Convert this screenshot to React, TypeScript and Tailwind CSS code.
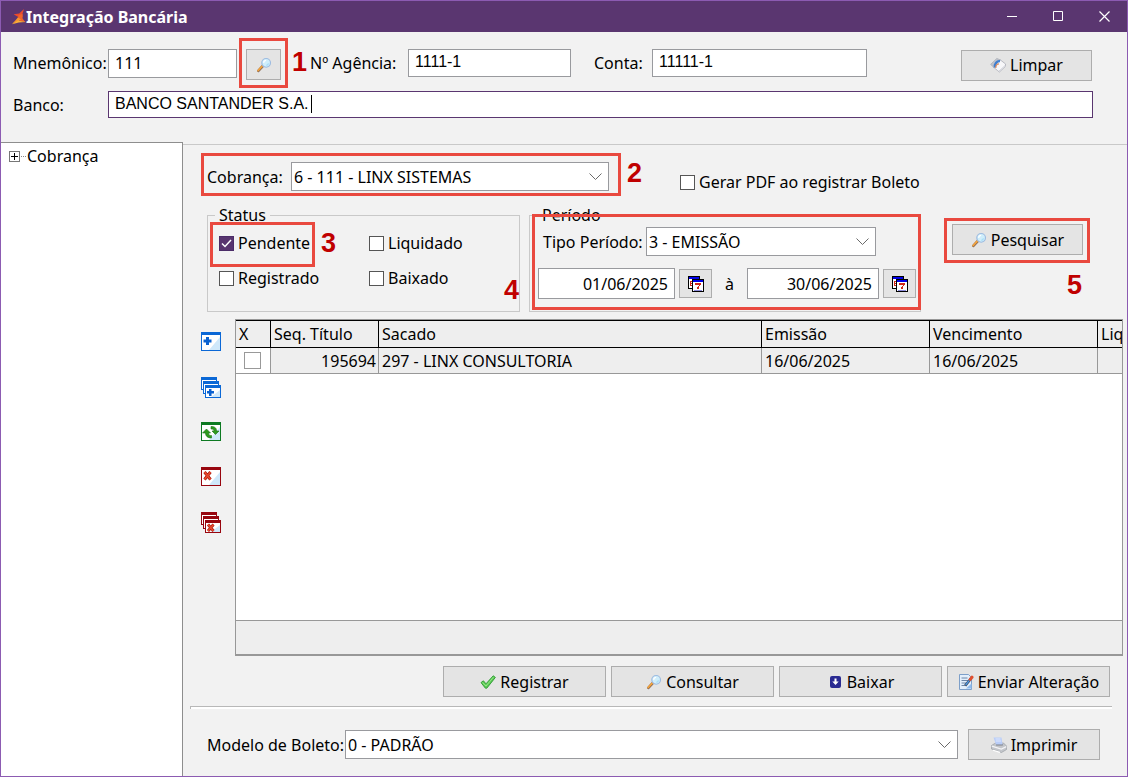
import React from "react";

const FIELD = "border border-[#999a9e] bg-white text-black outline-none";
const BUTTON =
  "flex items-center justify-center gap-1 whitespace-nowrap border border-[#adadad] bg-[#e4e4e4] text-black";

function Magnifier() {
  return (
    <svg width="16" height="16" viewBox="-1 -1 18 18" aria-hidden="true">
      <path d="M1.6 14.6 6.4 9.4" stroke="#8a6a55" strokeWidth="3" strokeLinecap="round" />
      <path d="M1.4 14.2 6 9.2" stroke="#f3a33c" strokeWidth="2" strokeLinecap="round" />
      <circle cx="10.4" cy="5.6" r="4.9" fill="#cfeefb" stroke="#9dbbe0" strokeWidth="1.3" />
      <path d="M7.6 5.6a3 3 0 0 1 2.8-2.9" stroke="#fff" strokeWidth="1.4" fill="none" />
      <path d="M13 6.2a2.8 2.8 0 0 1-2.4 2.2" stroke="#a5dcf5" strokeWidth="1.4" fill="none" />
    </svg>
  );
}

function Logo() {
  return (
    <svg width="14" height="16" viewBox="0 0 14 16" aria-hidden="true">
      <path d="M12 0 10.600 4.500 10.600 8 7 8.500 1.600 5.200 7.200 4.600Z" fill="#ea4a2c" />
      <path d="M6.600 6 10.500 5 10.600 9.500 13.400 13.200 8.400 12 6 9.500Z" fill="#f0642a" />
      <path d="M6 8.200 9 10.800 5.600 12.600 0 15 3.800 11Z" fill="#f8932c" />
      <path d="M0 15.200 6 11.400 13.800 13 6.800 13.600Z" fill="#fbb03a" />
    </svg>
  );
}

function EraserIcon() {
  return (
    <svg width="16" height="16" viewBox="0 0 16 16" aria-hidden="true">
      <path d="M0.6 7.4 6.8 1.4 10.2 2.8 3.8 10.4Z" fill="#bfc3cc" stroke="#a0a4ae" strokeWidth=".6" />
      <path d="M3.8 10.4 10.2 2.8 15.6 7 15.2 9.6 9.4 15 7.6 13.6Z" fill="#f7f7f9" stroke="#a9acb6" strokeWidth=".8" />
      <path d="M5 10.4C4.2 7 7 3.600 10 4.200" stroke="#3f7fd0" strokeWidth="2.400" fill="none" />
      <path d="M5.800 11C5.600 8.600 7.200 7 9 6.800" stroke="#e08a5a" strokeWidth="1.2" fill="none" />
      <path d="M9 14 14.800 8.800" stroke="#d3d5dc" />
    </svg>
  );
}

function CheckIcon() {
  return (
    <svg width="16" height="16" viewBox="0 0 16 16" aria-hidden="true">
      <path d="M1 8.6 3.4 6.8 6 9.8 13.2 1.8 15.4 3.4 6.8 14.2 5.4 14.2Z" fill="#5ccb55" stroke="#2f9a35" strokeWidth=".9" strokeLinejoin="round" />
      <path d="M2.4 8.6 6 12 13.4 3.2" stroke="#9be88c" strokeWidth=".9" fill="none" />
    </svg>
  );
}

function DownIcon() {
  return (
    <svg width="16" height="16" viewBox="0 0 16 16" aria-hidden="true">
      <rect x="3" y="2" width="11" height="12" rx="2" fill="#2a2b92" />
      <path d="M7.5 4.6h2v3h2.2L8.5 11 5.300 7.600h2.200z" fill="#fff" />
    </svg>
  );
}

function EditIcon() {
  return (
    <svg width="16" height="16" viewBox="0 0 16 16" aria-hidden="true">
      <path d="M1.500.500h9l3 3v12h-12z" fill="#e3effc" stroke="#7d9fc9" />
      <path d="M3.500 4h6M3.500 6.500h7M3.500 9h5M3.500 11.500h4" stroke="#6d86a8" />
      <path d="M8 14.500h5.500v-5z" fill="#8ebcf0" />
      <path d="M7.200 11.600 13.200 4.200" stroke="#3c4a60" strokeWidth="2.600" />
      <path d="M7.600 11 12.600 4.800" stroke="#4f9be8" strokeWidth="1.200" />
      <path d="M12.200 5.400 14 3.200" stroke="#e0502f" strokeWidth="3" strokeLinecap="round" />
    </svg>
  );
}

function PrinterIcon() {
  return (
    <svg width="16" height="16" viewBox="0 0 16 16" aria-hidden="true">
      <path d="M.5 8.500 4.500 6h8l3 3v3.500l-5 3-10-3.500z" fill="#c3c6cb" stroke="#9a9da3" strokeWidth=".7" />
      <path d="M5 7.800h6.800" stroke="#6c6f76" strokeWidth="1.200" />
      <path d="M2.500.500h8l1 7H5z" fill="#b9cdf8" />
      <path d="M4.500 2h5M4.800 4h5.400" stroke="#dfe8fd" />
      <path d="M.8 9.200 10.300 12 15.300 9.600" stroke="#f4f4f6" strokeWidth="1.200" fill="none" />
      <path d="M2 13.200 9 15.400" stroke="#fff" strokeWidth="1.200" />
    </svg>
  );
}

function CalendarIcon() {
  return (
    <svg width="16" height="16" viewBox="0 0 16 16" shapeRendering="crispEdges" aria-hidden="true">
      <rect x="0.5" y="0.5" width="11" height="12" fill="#fff" stroke="#000" />
      <rect x="1" y="1" width="10" height="2" fill="#0000e8" />
      <path d="M2 5h2v1H3v1h1v1H3v1h1v1H2z" fill="#d02818" />
      <rect x="4.500" y="3.500" width="11" height="12" fill="#fff" stroke="#000" />
      <rect x="5" y="4" width="10" height="2" fill="#0000e8" />
      <path d="M7 7h6v2h-1v1h-1v3H9v-2h1v-1h1V8.500H7z" fill="#d02818" />
      <path d="M6 14h8" stroke="#8a8ad8" />
    </svg>
  );
}

function WindowShape({ x, y, w, h, line, head }: { x: number; y: number; w: number; h: number; line: string; head: string }) {
  return (
    <g>
      <rect x={x + 0.5} y={y + 0.5} width={w - 1} height={h - 1} fill="#fff" stroke={line} />
      <path d={`M${x + w - 1} ${y + 5}v${h - 6}h-${Math.round(w * 0.55)}z`} fill="#cfe8fa" />
      <rect x={x} y={y} width={w} height="3" fill={head} />
    </g>
  );
}

function AddIcon() {
  return (
    <svg width="21" height="21" viewBox="0 0 21 21" aria-hidden="true">
      <WindowShape x={0} y={0} w={20} h={19} line="#0b68d6" head="#0b68d6" />
      <path d="M5 5h3v2.500h2.500v3H8V13H5v-2.500H2.500v-3H5z" fill="#0b62d0" />
    </svg>
  );
}

function AddAllIcon() {
  return (
    <svg width="21" height="21" viewBox="0 0 21 21" aria-hidden="true">
      <WindowShape x={0} y={0} w={16} h={13} line="#0b68d6" head="#0b68d6" />
      <WindowShape x={2} y={4} w={16} h={13} line="#0b68d6" head="#0b68d6" />
      <WindowShape x={4} y={8} w={16} h={13} line="#0b68d6" head="#0b68d6" />
      <path d="M8 12h2.500v2H13v2.500h-2.500V19H8v-2.500H6V14h2z" fill="#0b62d0" />
    </svg>
  );
}

function RefreshIcon() {
  return (
    <svg width="21" height="21" viewBox="0 0 21 21" aria-hidden="true">
      <WindowShape x={0} y={0} w={20} h={19} line="#0d7a22" head="#0d7a22" />
      <path d="M5.500 7 9.500 11H7.500c0 2 1 2.500 3 2.500v2.500C6.500 16 4.500 14 4.500 11H1.500z" fill="#2f9a1e" stroke="#167017" strokeWidth=".6" />
      <path d="M14.500 12.500 11 9h2c0-1.600-1-2-3-2V4.500c4 0 5.500 1.500 5.500 4.500h2.500z" fill="#2f9a1e" stroke="#167017" strokeWidth=".6" />
    </svg>
  );
}

function RemoveIcon() {
  return (
    <svg width="21" height="21" viewBox="0 0 21 21" aria-hidden="true">
      <WindowShape x={0} y={0} w={20} h={19} line="#98060f" head="#98060f" />
      <path d="M3.500 5 9.500 12.500M9.500 5 3.500 12.500" stroke="#a81c10" strokeWidth="3" />
      <path d="M3.500 5 9.500 12.500M9.500 5 3.500 12.500" stroke="#ea4a30" strokeWidth="1.600" />
    </svg>
  );
}

function RemoveAllIcon() {
  return (
    <svg width="21" height="21" viewBox="0 0 21 21" aria-hidden="true">
      <WindowShape x={0} y={0} w={16} h={13} line="#98060f" head="#98060f" />
      <WindowShape x={2} y={4} w={16} h={13} line="#98060f" head="#98060f" />
      <WindowShape x={4} y={8} w={16} h={13} line="#98060f" head="#98060f" />
      <path d="M7 12.500 12.500 19M12.500 12.500 7 19" stroke="#a81c10" strokeWidth="2.800" />
      <path d="M7 12.500 12.500 19M12.500 12.500 7 19" stroke="#ea4a30" strokeWidth="1.400" />
    </svg>
  );
}

function Select({ id, value, className }: { id: string; value: string; className: string }) {
  return (
    <div className={`relative ${className}`}>
      <select id={id} className={`${FIELD} block h-[29px] w-full appearance-none pl-0.5 pr-8`}>
        <option>{value}</option>
      </select>
      <svg className="pointer-events-none absolute right-[7px] top-[11px]" width="13" height="8" viewBox="0 0 13 8" aria-hidden="true">
        <path d="M.5.500 6.500 6.500 12.500.500" fill="none" stroke="#6a6a6a" />
      </svg>
    </div>
  );
}

function Check({ label, checked }: { label: string; checked?: boolean }) {
  return (
    <label className="flex items-center gap-1 whitespace-nowrap">
      <span className="relative block size-[15px] shrink-0">
        <input
          type="checkbox"
          defaultChecked={checked}
          className="peer block size-[15px] appearance-none border border-[#555] bg-white checked:border-[#4b2c68] checked:bg-[#58356f]"
        />
        <svg className="pointer-events-none absolute inset-0 hidden peer-checked:block" width="15" height="15" viewBox="0 0 15 15" aria-hidden="true">
          <path d="M3 7.500 6 10.500 12 4" fill="none" stroke="#fff" strokeWidth="1.500" />
        </svg>
      </span>
      {label}
    </label>
  );
}

function Step({ n, className }: { n: number; className: string }) {
  return (
    <span className={`pointer-events-none absolute font-['Liberation_Sans',sans-serif] text-[27px] font-bold leading-[27px] text-[#c00000] ${className}`}>
      {n}
    </span>
  );
}

const CELL = "overflow-hidden whitespace-nowrap px-[3px] py-0 text-left font-normal";

export default function App() {
  return (
    <div className="flex min-h-screen flex-col border border-[#8c5bb2] bg-[#f2f2f2] font-['Noto_Sans',sans-serif] text-base leading-5 text-black">
      <header className="flex h-[31px] items-center bg-[#5a3670] pl-[11px] text-white">
        <Logo />
        <h1 className="flex-1 text-base font-bold leading-5">Integração Bancária</h1>
        <button type="button" aria-label="Minimizar" className="flex h-full w-[46px] items-center justify-center">
          <svg width="11" height="11" viewBox="0 0 11 11"><path d="M0 5.500h10" stroke="#fff" /></svg>
        </button>
        <button type="button" aria-label="Maximizar" className="flex h-full w-[46px] items-center justify-center">
          <svg width="11" height="11" viewBox="0 0 11 11"><path d="M.5.500h9v9h-9z" fill="none" stroke="#fff" /></svg>
        </button>
        <button type="button" aria-label="Fechar" className="flex h-full w-[46px] items-center justify-center">
          <svg width="11" height="11" viewBox="0 0 11 11"><path d="M.5.500l10 10M10.500.500l-10 10" stroke="#fff" strokeWidth="1.200" /></svg>
        </button>
      </header>

      <section className="flex flex-col pb-6 pl-3 pr-[34px] pt-[7px]">
        <div className="flex h-12 items-center">
          <label htmlFor="mnemonico" className="w-[95px] shrink-0">Mnemônico:</label>
          <input id="mnemonico" defaultValue="111" className={`${FIELD} h-[29px] w-[129px] px-1.5`} />
          <div className="relative ml-0.5 border-[3px] border-[#e9493f] px-1 py-[5px]">
            <button type="button" aria-label="Procurar" className={`${BUTTON} mt-[3px] h-[31px] w-[35px]`}>
              <Magnifier />
            </button>
            <Step n={1} className="left-[50px] top-2" />
          </div>
          <label htmlFor="agencia" className="ml-[22px] w-[98px] shrink-0 whitespace-nowrap">Nº Agência:</label>
          <input id="agencia" defaultValue="1111-1" className={`${FIELD} h-7 w-[163px] px-1.5 pb-0.5 font-['Liberation_Sans',sans-serif]`} />
          <label htmlFor="conta" className="ml-[23px] w-[58px] shrink-0">Conta:</label>
          <input id="conta" defaultValue="11111-1" className={`${FIELD} h-7 w-[215px] px-1.5 pb-0.5 font-['Liberation_Sans',sans-serif]`} />
          <button type="button" className={`${BUTTON} ml-auto mr-px mt-1 h-[31px] w-[131px]`}>
            <EraserIcon />
            Limpar
          </button>
        </div>
        <div className="mt-1 flex items-center">
          <label htmlFor="banco" className="w-[95px] shrink-0">Banco:</label>
          <div className="relative flex-1">
            <input
              id="banco"
              defaultValue="BANCO SANTANDER S.A."
              className="block h-[27px] w-full border border-[#5a3670] bg-white px-1.5 pb-0.5 font-['Liberation_Sans',sans-serif] outline-none"
            />
            <span className="absolute left-[203px] top-1 h-[18px] w-px bg-black" />
          </div>
        </div>
      </section>

      <div className="flex flex-1">
        <nav className="w-[182px] shrink-0 border-r border-t border-[#8e8e8e] bg-white pl-2 pt-[3px]">
          <a href="#cobranca" className="flex items-center">
            <svg width="18" height="11" viewBox="0 0 18 11" shapeRendering="crispEdges" aria-hidden="true">
              <rect x=".5" y=".5" width="10" height="10" fill="#fff" stroke="#777" />
              <path d="M2 5.500h7M5.500 2v7" stroke="#000" />
              <path d="M12 5.500h6" stroke="#888" strokeDasharray="1 1" />
            </svg>
            Cobrança
          </a>
        </nav>

        <main className="mt-0.5 flex min-w-0 flex-1 flex-col border-t border-[#c9c9c9] pb-4 pl-[18px] pt-2">
          <div className="flex">
            <div className="relative flex items-center border-[3px] border-[#e9493f] pb-0.5 pl-[3px] pr-[9px] pt-1.5">
              <label htmlFor="cobranca" className="w-[84px] shrink-0">Cobrança:</label>
              <Select id="cobranca" value="6 - 111 - LINX SISTEMAS" className="w-[318px]" />
              <Step n={2} className="left-[423px] top-1" />
            </div>
            <div className="ml-[59px] pt-[19px]">
              <Check label="Gerar PDF ao registrar Boleto" />
            </div>
          </div>

          <div className="mt-[9px] flex items-start pl-1.5">
            <fieldset className="relative h-[107px] w-[313px] border border-[#c9c9c9] px-[11px]">
              <legend className="-ml-1 px-1">Status</legend>
              <div className="grid grid-cols-[150px_auto] gap-y-[15px] pt-2">
                <Check label="Pendente" checked />
                <Check label="Liquidado" />
                <Check label="Registrado" />
                <Check label="Baixado" />
              </div>
              <div className="pointer-events-none absolute -top-[3px] left-0.5 h-[45px] w-[105px] border-[3px] border-[#e9493f]" />
              <Step n={3} className="left-[113px] top-[5px]" />
              <Step n={4} className="right-0 top-[52px]" />
            </fieldset>

            <fieldset className="relative ml-[9px] h-[107px] w-[392px] border border-[#c9c9c9] pl-2">
              <legend className="px-1">Período</legend>
              <div className="flex items-center pl-[5px] pt-0.5">
                <label htmlFor="tipo" className="w-[103px] shrink-0 whitespace-nowrap">Tipo Período:</label>
                <Select id="tipo" value="3 - EMISSÃO" className="w-[230px]" />
              </div>
              <div className="mt-3 flex items-center">
                <input aria-label="Data inicial" defaultValue="01/06/2025" className={`${FIELD} h-[31px] w-[137px] px-1.5 text-right`} />
                <button type="button" aria-label="Calendário inicial" className={`${BUTTON} ml-1 h-[29px] w-[33px]`}>
                  <CalendarIcon />
                </button>
                <span className="w-[35px] text-center">à</span>
                <input aria-label="Data final" defaultValue="30/06/2025" className={`${FIELD} h-[31px] w-[132px] px-1.5 text-right`} />
                <button type="button" aria-label="Calendário final" className={`${BUTTON} ml-1 h-[29px] w-[33px]`}>
                  <CalendarIcon />
                </button>
              </div>
              <div className="pointer-events-none absolute -right-px -top-[11px] bottom-px left-0.5 border-[3px] border-[#e9493f]" />
            </fieldset>

            <div className="relative ml-[23px] mt-[13px] border-[3px] border-[#e9493f] pb-[5px] pl-[5px] pr-1 pt-[3px]">
              <button type="button" className={`${BUTTON} h-[31px] w-[131px]`}>
                <Magnifier />
                Pesquisar
              </button>
              <Step n={5} className="left-[120px] top-[51px]" />
            </div>
          </div>

          <div className="mt-[7px] flex flex-1">
            <div className="flex w-[34px] shrink-0 flex-col gap-6 pt-[13px]">
              <button type="button" aria-label="Marcar título"><AddIcon /></button>
              <button type="button" aria-label="Marcar todos"><AddAllIcon /></button>
              <button type="button" aria-label="Inverter marcação"><RefreshIcon /></button>
              <button type="button" aria-label="Desmarcar título"><RemoveIcon /></button>
              <button type="button" aria-label="Desmarcar todos"><RemoveAllIcon /></button>
            </div>
            <div className="mr-1 flex min-w-0 flex-1 flex-col border border-b-2 border-[#989898] bg-white">
              <table className="w-full table-fixed border-separate border-spacing-0">
                <colgroup>
                  <col className="w-[35px]" />
                  <col className="w-[108px]" />
                  <col />
                  <col className="w-[168px]" />
                  <col className="w-[168px]" />
                  <col className="w-[24px]" />
                </colgroup>
                <thead>
                  <tr className="h-7 bg-[#eeeeee]">
                    {["X", "Seq. Título", "Sacado", "Emissão", "Vencimento", "Liq"].map((h) => (
                      <th key={h} className={`${CELL} border-y border-r border-black last:border-r-0`}>{h}</th>
                    ))}
                  </tr>
                </thead>
                <tbody>
                  <tr className="h-[26px] bg-[#eeeeee]">
                    <td className={`${CELL} border-b border-r border-[#989898] bg-white`}>
                      <input type="checkbox" aria-label="Selecionar 195694" className="ml-[5px] block size-[17px] appearance-none border border-[#999] bg-white" />
                    </td>
                    <td className="whitespace-nowrap border-b border-r border-[#989898] px-0.5 py-0 text-right">195694</td>
                    <td className={`${CELL} border-b border-r border-[#989898]`}>297 - LINX CONSULTORIA</td>
                    <td className={`${CELL} border-b border-r border-[#989898]`}>16/06/2025</td>
                    <td className={`${CELL} border-b border-r border-[#989898]`}>16/06/2025</td>
                    <td className={`${CELL} border-b border-[#989898]`} />
                  </tr>
                </tbody>
              </table>
              <div className="mt-auto h-[34px] border-t border-[#989898] bg-[#eeeeee]" />
            </div>
          </div>

          <div className="mt-2.5 flex justify-end gap-[5px] pr-[17px]">
            <button type="button" className={`${BUTTON} h-[31px] w-[163px]`}><CheckIcon />Registrar</button>
            <button type="button" className={`${BUTTON} h-[31px] w-[163px]`}><Magnifier />Consultar</button>
            <button type="button" className={`${BUTTON} h-[31px] w-[163px]`}><DownIcon />Baixar</button>
            <button type="button" className={`${BUTTON} h-[31px] w-[163px]`}><EditIcon />Enviar Alteração</button>
          </div>

          <div className="-ml-[11px] mr-[15px] mt-[9px] h-[3px] border-l border-t border-[#b8b8b8] bg-white" />

          <div className="mt-5 flex items-center pl-1.5 pr-[27px]">
            <label htmlFor="modelo" className="w-[138px] shrink-0 whitespace-nowrap">Modelo de Boleto:</label>
            <Select id="modelo" value="0 - PADRÃO" className="flex-1" />
            <button type="button" className={`${BUTTON} ml-2.5 h-[31px] w-[132px]`}><PrinterIcon />Imprimir</button>
          </div>
        </main>
      </div>
    </div>
  );
}
